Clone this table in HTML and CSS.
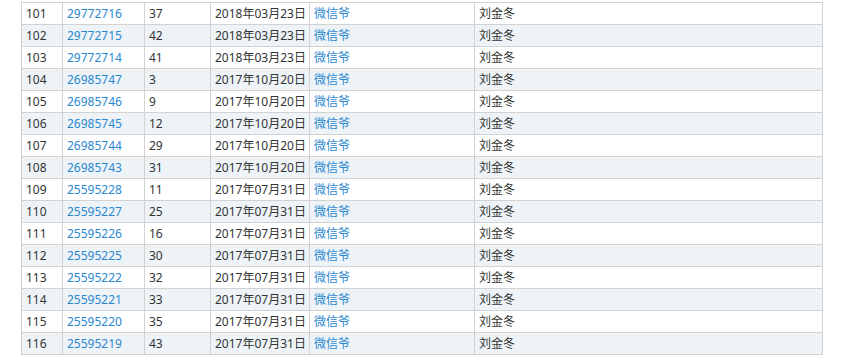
FILE: index.html
```html
<!DOCTYPE html>
<html lang="zh">
<head>
<meta charset="utf-8">
<link rel="stylesheet" href="styles.css">
</head>
<body>
<div class="wrap">
<table class="list">
<colgroup>
<col class="c1"><col class="c2"><col class="c3"><col class="c4"><col class="c5"><col class="c6">
</colgroup>
<tbody>
<tr><td>101</td><td><a href="#">29772716</a></td><td>37</td><td>2018年03月23日</td><td><a href="#">微信爷</a></td><td>刘金冬</td></tr>
<tr><td>102</td><td><a href="#">29772715</a></td><td>42</td><td>2018年03月23日</td><td><a href="#">微信爷</a></td><td>刘金冬</td></tr>
<tr><td>103</td><td><a href="#">29772714</a></td><td>41</td><td>2018年03月23日</td><td><a href="#">微信爷</a></td><td>刘金冬</td></tr>
<tr><td>104</td><td><a href="#">26985747</a></td><td>3</td><td>2017年10月20日</td><td><a href="#">微信爷</a></td><td>刘金冬</td></tr>
<tr><td>105</td><td><a href="#">26985746</a></td><td>9</td><td>2017年10月20日</td><td><a href="#">微信爷</a></td><td>刘金冬</td></tr>
<tr><td>106</td><td><a href="#">26985745</a></td><td>12</td><td>2017年10月20日</td><td><a href="#">微信爷</a></td><td>刘金冬</td></tr>
<tr><td>107</td><td><a href="#">26985744</a></td><td>29</td><td>2017年10月20日</td><td><a href="#">微信爷</a></td><td>刘金冬</td></tr>
<tr><td>108</td><td><a href="#">26985743</a></td><td>31</td><td>2017年10月20日</td><td><a href="#">微信爷</a></td><td>刘金冬</td></tr>
<tr><td>109</td><td><a href="#">25595228</a></td><td>11</td><td>2017年07月31日</td><td><a href="#">微信爷</a></td><td>刘金冬</td></tr>
<tr><td>110</td><td><a href="#">25595227</a></td><td>25</td><td>2017年07月31日</td><td><a href="#">微信爷</a></td><td>刘金冬</td></tr>
<tr><td>111</td><td><a href="#">25595226</a></td><td>16</td><td>2017年07月31日</td><td><a href="#">微信爷</a></td><td>刘金冬</td></tr>
<tr><td>112</td><td><a href="#">25595225</a></td><td>30</td><td>2017年07月31日</td><td><a href="#">微信爷</a></td><td>刘金冬</td></tr>
<tr><td>113</td><td><a href="#">25595222</a></td><td>32</td><td>2017年07月31日</td><td><a href="#">微信爷</a></td><td>刘金冬</td></tr>
<tr><td>114</td><td><a href="#">25595221</a></td><td>33</td><td>2017年07月31日</td><td><a href="#">微信爷</a></td><td>刘金冬</td></tr>
<tr><td>115</td><td><a href="#">25595220</a></td><td>35</td><td>2017年07月31日</td><td><a href="#">微信爷</a></td><td>刘金冬</td></tr>
<tr><td>116</td><td><a href="#">25595219</a></td><td>43</td><td>2017年07月31日</td><td><a href="#">微信爷</a></td><td>刘金冬</td></tr>
</tbody>
</table>
</div>
</body>
</html>
```
FILE: styles.css
```css
html, body {
  margin: 0;
  padding: 0;
  background: #fff;
}
.wrap {
  padding: 2px 0 0 21px;
}
.list {
  border-collapse: collapse;
  table-layout: fixed;
  width: 801px;
  font-family: "Noto Sans", "Noto Sans CJK SC", sans-serif;
  font-size: 12px;
  color: #333;
}
.c1 { width: 41px; }
.c2 { width: 82px; }
.c3 { width: 66px; }
.c4 { width: 99px; }
.c5 { width: 165px; }
.c6 { width: 348px; }
.list td {
  border: 1px solid #d2d2d2;
  height: 21px;
  padding: 0 4px;
  line-height: 21px;
  white-space: nowrap;
  overflow: hidden;
  box-sizing: border-box;
}
.list tr:nth-child(even) td {
  background: #eef3f8;
}
.list a {
  color: #2a88cf;
  text-decoration: none;
}
```
